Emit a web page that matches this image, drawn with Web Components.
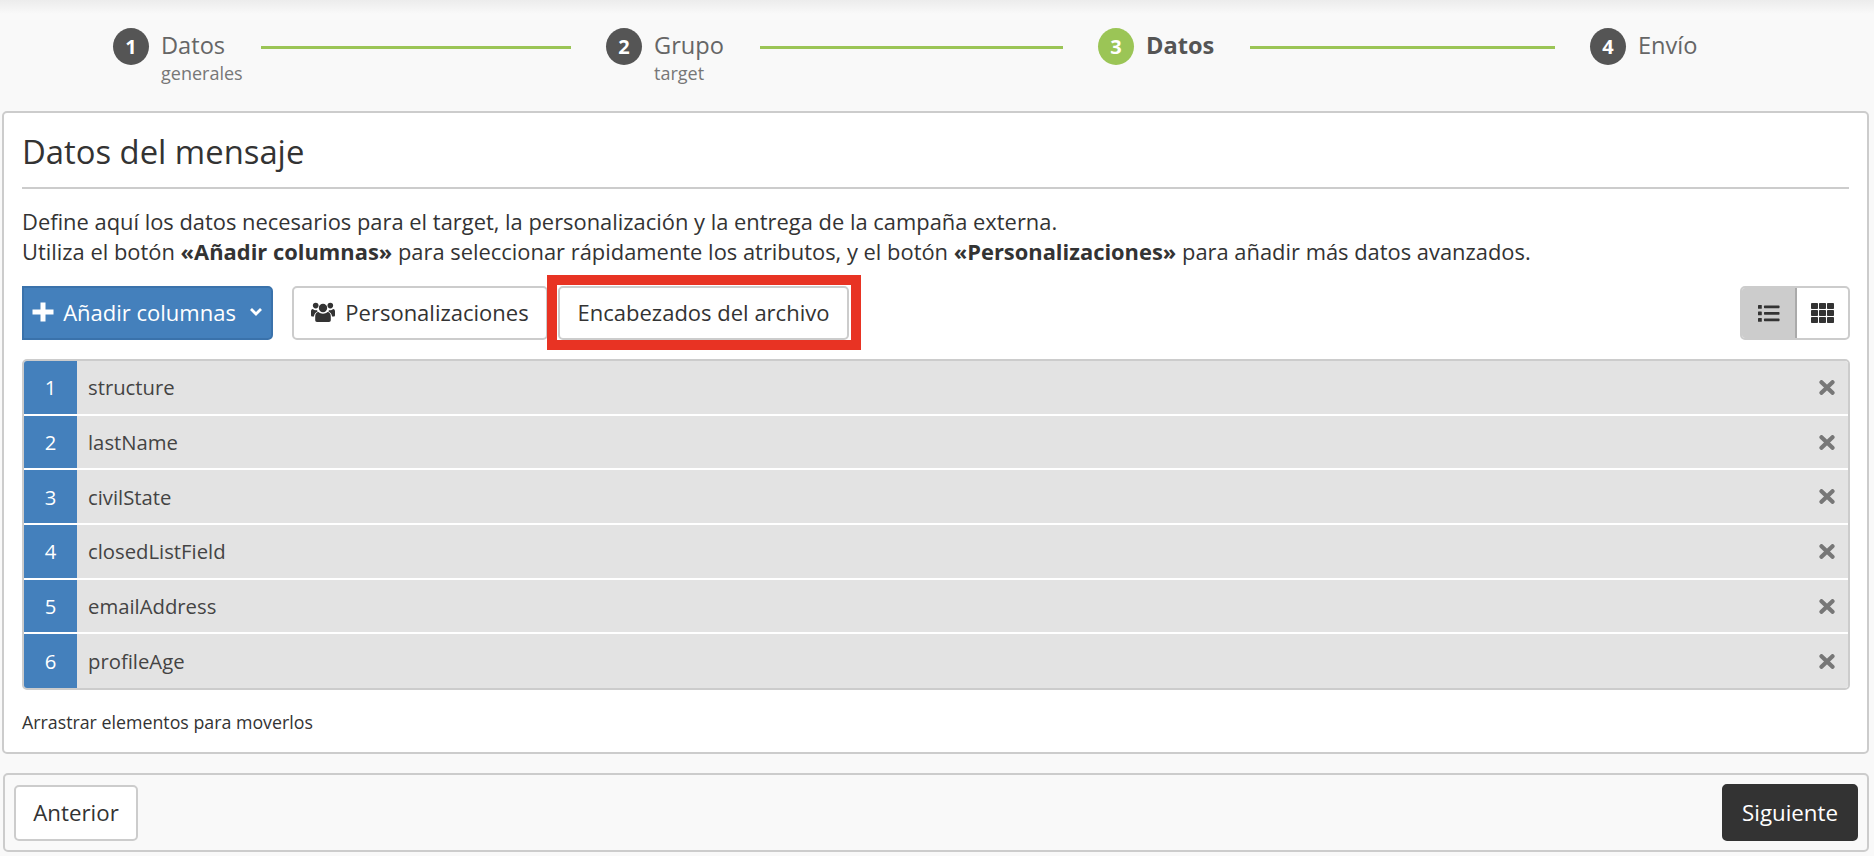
<!DOCTYPE html>
<html lang="es"><head><meta charset="utf-8"><title>Datos del mensaje</title>
<style>
html,body{margin:0;padding:0;height:856px;overflow:hidden;background:#f9f9f9;font-family:"Open Sans",sans-serif;color:#333}
</style></head><body>
<wizard-steps></wizard-steps>
<message-panel></message-panel>
<footer-bar></footer-bar>
<script>
const ICONS={
plus:'<svg width="22" height="20" viewBox="0 0 22 20" style="margin-right:1px"><path d="M8.500 0.500h5v7h8v5h-8v7h-5v-7h-8v-5h8z" fill="#fff"/></svg>',
chev:'<svg width="14" height="10" viewBox="0 0 14 10" style="margin-left:5px"><path d="M2 2l5 5 5-5" fill="none" stroke="#fff" stroke-width="2.8"/></svg>',
users:'<svg width="24" height="20" viewBox="0 0 24 20" fill="#333"><circle cx="12" cy="6" r="4.2"/><circle cx="4.7" cy="3.6" r="2.8"/><circle cx="19.3" cy="3.6" r="2.8"/><path d="M6 20c-1.2 0-1.8-.7-1.8-2v-3.500c0-3 1.500-4.500 3.300-4.500 1.200 1.100 2.800 1.700 4.500 1.700s3.300-.6 4.500-1.700c1.800 0 3.300 1.500 3.300 4.500V18c0 1.300-.6 2-1.800 2z"/><path d="M0 9.500C0 8 .6 7 1.800 7c.9.800 1.900 1.200 3 1.200.5 0 .9 0 1.300-.2-.1.600.2 1.100.5 1.500-1.800.9-3.400 2.300-3.700 5H1.500C.5 14.500 0 14 0 13zM24 9.500C24 8 23.400 7 22.200 7c-.9.800-1.900 1.200-3 1.200-.5 0-.9 0-1.300-.2.100.6-.2 1.100-.5 1.500 1.800.9 3.400 2.300 3.700 5h1.400c1 0 1.500-.5 1.500-1.500z"/></svg>',
list:'<svg width="22" height="18" viewBox="0 0 22 18" fill="#333"><rect x="0" y="1" width="3.800" height="3.800" rx=".6"/><rect x="0" y="7.500" width="3.800" height="3.800" rx=".6"/><rect x="0" y="14" width="3.800" height="3.800" rx=".6"/><rect x="6" y="1.600" width="15.500" height="2.600" rx=".6"/><rect x="6" y="8.100" width="15.500" height="2.600" rx=".6"/><rect x="6" y="14.600" width="15.500" height="2.600" rx=".6"/></svg>',
grid:'<svg width="23" height="20" viewBox="0 0 23 20" fill="#333"><rect x="0" y="0" width="7" height="6" rx=".8"/><rect x="8" y="0" width="7" height="6" rx=".8"/><rect x="16" y="0" width="7" height="6" rx=".8"/><rect x="0" y="7" width="7" height="6" rx=".8"/><rect x="8" y="7" width="7" height="6" rx=".8"/><rect x="16" y="7" width="7" height="6" rx=".8"/><rect x="0" y="14" width="7" height="6" rx=".8"/><rect x="8" y="14" width="7" height="6" rx=".8"/><rect x="16" y="14" width="7" height="6" rx=".8"/></svg>',
x:'<svg width="16" height="15" viewBox="0 0 16 15"><path d="M2.500 2.200l11 10.600M13.500 2.200l-11 10.600" fill="none" stroke="#777" stroke-width="4.200" stroke-linecap="round"/></svg>'
};
class WizardSteps extends HTMLElement{constructor(){super();this.attachShadow({mode:"open"}).innerHTML=`<style>
:host{display:flex;align-items:flex-start;box-sizing:border-box;height:111px;padding:28px 0 0 113px;background:linear-gradient(#ececec 0,#f9f9f9 14px);}
.step{display:flex;gap:12px;align-items:flex-start}
.n{width:36px;height:37px;border-radius:50%;background:#555;color:#fff;font-weight:700;font-size:20px;display:flex;align-items:center;justify-content:center;flex:none}
.t{font-size:23.600px;line-height:28px;color:#666;margin-top:3px}
.s{font-size:18px;line-height:24px;color:#777;margin-top:2px}
.on .n{background:#9bc556}.on .t{font-weight:700;color:#555}
.l{height:3px;background:#9bc556;margin-top:18px;flex:none}
</style>
<div class="step" style="width:148px"><div class="n">1</div><div><div class="t">Datos</div><div class="s">generales</div></div></div>
<div class="l" style="width:310px"></div>
<div class="step" style="margin-left:35px;width:154px"><div class="n">2</div><div><div class="t">Grupo</div><div class="s">target</div></div></div>
<div class="l" style="width:303px"></div>
<div class="step on" style="margin-left:35px;width:152px"><div class="n">3</div><div><div class="t">Datos</div></div></div>
<div class="l" style="width:305px"></div>
<div class="step" style="margin-left:35px"><div class="n">4</div><div><div class="t">Envío</div></div></div>`}}
customElements.define("wizard-steps",WizardSteps);

class UiBtn extends HTMLElement{constructor(){super();this.attachShadow({mode:"open"}).innerHTML=`<style>
:host{display:inline-flex;align-items:center;justify-content:center;box-sizing:border-box;height:54px;border:2px solid #ccc;border-radius:5px;background:#fff;color:#333;font-size:22px;position:relative;gap:10px;white-space:nowrap}
:host([variant=primary]){background:#4480bc;border-color:#3a72ab;color:#fff;border-radius:0 5px 5px 0;gap:8px}
:host([variant=dark]){background:#333;border-color:#333;color:#fff}
</style><slot></slot>`}}
customElements.define("ui-btn",UiBtn);

class ListRow extends HTMLElement{constructor(){super();this.attachShadow({mode:"open"}).innerHTML=`<style>
:host{display:flex;align-items:center;height:52.700px;background:#e3e3e3;font-size:20.300px;color:#444}
:host(:last-child){height:54px}
.n{width:53px;height:100%;background:#4480bc;color:#fff;display:flex;align-items:center;justify-content:center;flex:none}
.v{flex:1;padding-left:11px}
.x{display:flex;padding-right:13px}
</style><div class="n">${this.getAttribute("n")}</div><div class="v"><slot></slot></div><div class="x">${ICONS.x}</div>`}}
customElements.define("list-row",ListRow);

class MessagePanel extends HTMLElement{constructor(){super();const rows=["structure","lastName","civilState","closedListField","emailAddress","profileAge"];
this.attachShadow({mode:"open"}).innerHTML=`<style>
:host{display:block;box-sizing:border-box;margin:0 5px 0 2px;height:643px;background:#fff;border:2px solid #ccc;border-radius:5px;padding:0 17px 0 18px}
h1{font-weight:400;font-size:32.800px;line-height:44px;margin:0 1px 18px 0;padding-top:17px;height:76px;box-sizing:border-box;border-bottom:2px solid #ccc;color:#333}
p{margin:0;font-size:21.900px;line-height:30px;color:#333;white-space:nowrap}
.bar{display:flex;align-items:flex-start;margin-top:19px}
.bar ui-btn{padding-bottom:2px}
.bar ui-btn:nth-child(1){width:251px}
.bar ui-btn:nth-child(2){width:256px;margin-left:19px}
.bar ui-btn:nth-child(3){width:291px;margin-left:10px}
.mark{position:absolute;inset:-13px -14px -12px -13px;border:10px solid #e83323;pointer-events:none}
.tog{margin-left:auto;display:flex;width:110px;height:54px;box-sizing:border-box;border:2px solid #ccc;border-radius:5px;background:#fff;overflow:hidden}
.tog span{display:flex;align-items:center;justify-content:center}
.tog .a{width:53px;background:#ccc;border-right:2px solid #aaa}
.tog .b{flex:1}
.list{margin-top:19px;border:2px solid #ccc;border-radius:5px;background:#fff;display:flex;flex-direction:column;gap:2px;overflow:hidden}
.hint{font-size:17.800px;line-height:24px;color:#333;margin-top:20px}
</style>
<h1>Datos del mensaje</h1>
<p>Define aquí los datos necesarios para el target, la personalización y la entrega de la campaña externa.</p>
<p>Utiliza el botón <b>«Añadir columnas»</b> para seleccionar rápidamente los atributos, y el botón <b>«Personalizaciones»</b> para añadir más datos avanzados.</p>
<div class="bar">
<ui-btn variant="primary">${ICONS.plus}<span>Añadir columnas</span>${ICONS.chev}</ui-btn>
<ui-btn>${ICONS.users}<span>Personalizaciones</span></ui-btn>
<ui-btn><span>Encabezados del archivo</span><span class="mark"></span></ui-btn>
<div class="tog"><span class="a">${ICONS.list}</span><span class="b">${ICONS.grid}</span></div>
</div>
<div class="list">${rows.map((r,i)=>`<list-row n="${i+1}">${r}</list-row>`).join("")}</div>
<div class="hint">Arrastrar elementos para moverlos</div>`}}
customElements.define("message-panel",MessagePanel);

class FooterBar extends HTMLElement{constructor(){super();this.attachShadow({mode:"open"}).innerHTML=`<style>
:host{display:flex;justify-content:space-between;align-items:center;box-sizing:border-box;margin:19px 5px 0 3px;height:79px;border:2px solid #ccc;border-radius:5px;padding:0 9px 0 9px}
ui-btn{font-size:22.300px}
ui-btn:first-of-type{width:124px;height:56px}
ui-btn:last-of-type{width:136px;height:57px}
</style><ui-btn>Anterior</ui-btn><ui-btn variant="dark">Siguiente</ui-btn>`}}
customElements.define("footer-bar",FooterBar);
</script>
</body></html>
